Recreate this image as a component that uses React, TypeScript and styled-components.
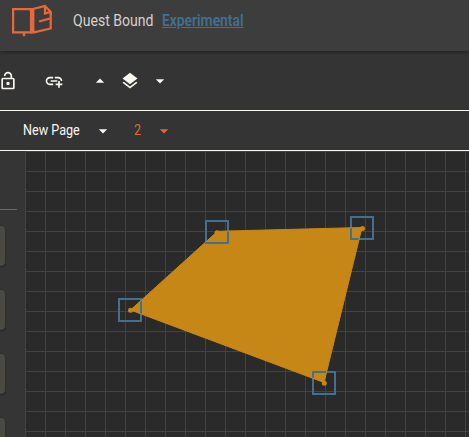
import React from 'react';
import styled, { createGlobalStyle } from 'styled-components';
import { MdOutlineLockOpen, MdAddLink, MdArrowDropUp, MdArrowDropDown, MdLayers } from 'react-icons/md';

const GlobalStyle = createGlobalStyle`
  *, *::before, *::after { box-sizing: border-box; }
  body { margin: 0; overflow: hidden; background: #2a2a2a; }
`;

const Page = styled.div`
  display: flex;
  flex-direction: column;
  width: 100%;
  height: 100vh;
  overflow: hidden;
  background: #343434;
  color: #faf7f2;
  font-family: Roboto, sans-serif;
`;

const Header = styled.header`
  display: flex;
  align-items: center;
  flex: none;
  height: 51px;
  padding: 0 0 9px 12px;
  background: #3d3d3d;
  box-shadow: 0 1px 4px rgba(0, 0, 0, 0.4);
  z-index: 1;
`;

const Logo = styled.svg`
  width: 41px;
  height: 34px;
  margin: 0 20px 2px 0;
`;

const Condensed = styled.span<{ $size: number; $width: number; $scale: number }>`
  display: inline-block;
  flex: none;
  width: ${(p) => p.$width}px;
  font-size: ${(p) => p.$size}px;
  line-height: 20px;
  white-space: nowrap;
  transform: scaleX(${(p) => p.$scale});
  transform-origin: 0 50%;
`;

const Title = styled(Condensed)`
  color: #d4d1cc;
`;

const TagLink = styled(Condensed).attrs({ as: 'a' })`
  margin-left: 9px;
  color: #417090;
  font-weight: 600;
  text-decoration: underline;
`;

const Toolbar = styled.div`
  display: flex;
  align-items: center;
  flex: none;
  height: 60px;
  padding-top: 1px;
  border-bottom: 1px solid #faf7f2;
`;

const Tool = styled.span<{ $before?: number; $accent?: boolean }>`
  display: flex;
  flex: none;
  margin-left: ${(p) => p.$before ?? 0}px;
  color: ${(p) => (p.$accent ? '#e2673b' : 'inherit')};
  font-size: 20px;
`;

const PageBar = styled.div`
  display: flex;
  align-items: center;
  flex: none;
  height: 40px;
  padding-left: 23px;
  border-bottom: 1px solid #faf7f2;
`;

const PageName = styled(Condensed)`
  margin-bottom: 1px;
`;

const PageNumber = styled(PageName)`
  margin-left: 21px;
  color: #e2673b;
`;

const Workspace = styled.main`
  display: flex;
  flex: 1;
  min-height: 0;
`;

const Sidebar = styled.aside`
  flex: none;
  width: 25px;
  height: 100%;
  overflow: hidden;
  background: #353535;
`;

const Divider = styled.hr`
  width: 17px;
  height: 1px;
  margin: 58px 0 16px;
  border: 0;
  background: #6a6a6a;
`;

const Card = styled.div`
  width: 5px;
  height: 40px;
  margin-bottom: 24px;
  border-radius: 0 4px 4px 0;
  background: #4a4944;
  box-shadow: 0 1px 2px rgba(0, 0, 0, 0.5);
`;

const Canvas = styled.section`
  flex: 1;
  min-width: 0;
  background-color: #2a2a2a;
  background-image: linear-gradient(to right, #434343 1px, transparent 1px),
    linear-gradient(to bottom, #434343 1px, transparent 1px);
  background-size: 20px 20px;
`;

const Drawing = styled.svg`
  display: block;
  width: 444px;
  height: 286px;
`;

const points = '105.5,159 192.5,80.3 337,76.5 299,231.5';
const handles = [
  { x: 93, y: 147, cx: 105.5, cy: 159.2 },
  { x: 180, y: 69, cx: 192, cy: 81.8 },
  { x: 325, y: 65, cx: 337.5, cy: 77.5 },
  { x: 287, y: 220, cx: 299.3, cy: 232.3 },
];

export default function App() {
  return (
    <Page>
      <GlobalStyle />
      <Header>
        <Logo viewBox="0 0 41 34" fill="none" stroke="#e8683c" strokeWidth="2.2">
          <path d="M1.1 6.1H19V29.4H1.1Z M22 29.4L38.7 25.5V9" />
          <path d="M20.4 5V30.5" strokeWidth="4" />
          <path d="M21 6L33 3L38.7 9V12M33 3V10.5L38.7 8.8M27 18.5L38 15.5" />
          <path d="M12 29.5V33.2" strokeWidth="2.5" />
        </Logo>
        <Title $size={16} $width={80} $scale={0.88}>Quest Bound</Title>
        <TagLink $size={16} $width={82} $scale={0.865}>Experimental</TagLink>
      </Header>
      <Toolbar>
        <Tool $before={-2}><MdOutlineLockOpen /></Tool>
        <Tool $before={26}><MdAddLink /></Tool>
        <Tool $before={26}><MdArrowDropUp /></Tool>
        <Tool $before={10}><MdLayers /></Tool>
        <Tool $before={10}><MdArrowDropDown /></Tool>
      </Toolbar>
      <PageBar>
        <PageName $size={14} $width={57} $scale={0.9}>New Page</PageName>
        <Tool $before={13}><MdArrowDropDown /></Tool>
        <PageNumber $size={14} $width={7} $scale={0.89}>2</PageNumber>
        <Tool $before={13} $accent><MdArrowDropDown /></Tool>
      </PageBar>
      <Workspace>
        <Sidebar>
          <Divider />
          <Card />
          <Card />
          <Card />
          <Card />
        </Sidebar>
        <Canvas>
          <Drawing viewBox="0 0 444 286">
            <polygon points={points} fill="#c68717" />
            {handles.map((h) => (
              <rect key={h.x} x={h.x + 1} y={h.y + 1} width="22" height="22" fill="none" stroke="#417090" strokeWidth="2" />
            ))}
            <polygon points={points} fill="none" stroke="#c68717" strokeWidth="1" />
            {handles.map((h) => (
              <circle key={h.x} cx={h.cx} cy={h.cy} r="2.5" fill="#c68717" />
            ))}
          </Drawing>
        </Canvas>
      </Workspace>
    </Page>
  );
}
